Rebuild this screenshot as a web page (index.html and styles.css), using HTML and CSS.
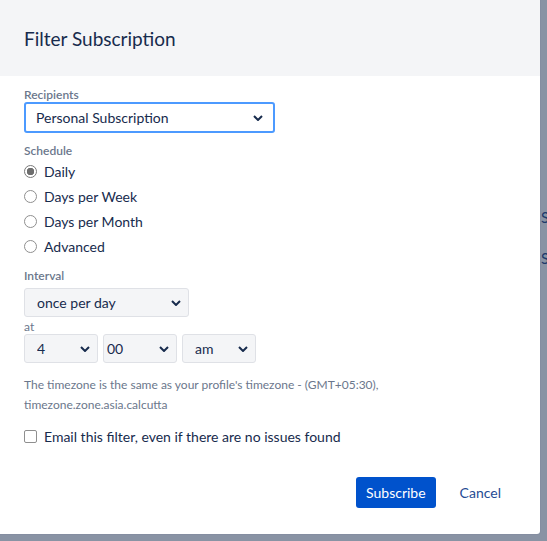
FILE: index.html
```html
<!DOCTYPE html>
<html>

<head>
  <title>Filter Subscription</title>
  <meta name="viewport" content="width=device-width, initial-scale=1.0">
  <link rel="stylesheet" href="styles.css">
</head>

<body>
  <div class="page">
    <div class="dialog">
      <div class="dialog-header">
        <h2>Filter Subscription</h2>
      </div>

      <form class="dialog-body">
        <label class="field-label" for="recipients">Recipients</label>
        <div class="select-wrap select-focus">
          <select id="recipients">
            <option>Personal Subscription</option>
          </select>
          <svg class="chevron" width="10" height="6" viewBox="0 0 10 6"><path d="M1 1l4 4 4-4" /></svg>
        </div>

        <div class="field-label schedule-label">Schedule</div>
        <div class="radios">
          <label class="radio"><input type="radio" name="schedule" checked> Daily</label>
          <label class="radio"><input type="radio" name="schedule"> Days per Week</label>
          <label class="radio"><input type="radio" name="schedule"> Days per Month</label>
          <label class="radio"><input type="radio" name="schedule"> Advanced</label>
        </div>

        <label class="field-label interval-label" for="interval">Interval</label>
        <div class="select-wrap select-interval">
          <select id="interval">
            <option>once per day</option>
          </select>
          <svg class="chevron" width="10" height="6" viewBox="0 0 10 6"><path d="M1 1l4 4 4-4" /></svg>
        </div>

        <div class="at-label">at</div>
        <div class="time-row">
          <div class="select-wrap select-time">
            <select><option>4</option></select>
            <svg class="chevron" width="10" height="6" viewBox="0 0 10 6"><path d="M1 1l4 4 4-4" /></svg>
          </div>
          <div class="select-wrap select-time select-minutes">
            <select><option>00</option></select>
            <svg class="chevron" width="10" height="6" viewBox="0 0 10 6"><path d="M1 1l4 4 4-4" /></svg>
          </div>
          <div class="select-wrap select-time">
            <select><option>am</option></select>
            <svg class="chevron" width="10" height="6" viewBox="0 0 10 6"><path d="M1 1l4 4 4-4" /></svg>
          </div>
        </div>

        <p class="timezone">The timezone is the same as your profile's timezone - (GMT+05:30),<br>timezone.zone.asia.calcutta</p>

        <label class="checkbox"><input type="checkbox"> Email this filter, even if there are no issues found</label>

        <div class="dialog-footer">
          <button type="submit" class="btn-primary">Subscribe</button>
          <button type="button" class="btn-link">Cancel</button>
        </div>
      </form>
    </div>

    <div class="behind">
      <span>S</span>
      <span>S</span>
    </div>
  </div>
</body>

</html>
```

FILE: styles.css
```css
body {
  font-family: 'Segoe UI', Lato, sans-serif;
  background: #8993a4;
  margin: 0;
  padding: 0;
  height: 100vh;
  overflow: hidden;
  color: #172b4d;
}

.page {
  display: flex;
  align-items: flex-start;
}

.dialog {
  width: 540px;
  flex-shrink: 0;
  background: white;
  border-bottom-right-radius: 3px;
  box-shadow: 0 0 1px rgba(9, 30, 66, 0.3);
}

.dialog-header {
  background: #f4f5f7;
  height: 76px;
  padding: 0 24px;
  display: flex;
  align-items: center;
}

.dialog-header h2 {
  margin: 0;
  font-size: 19px;
  font-weight: 400;
  color: #172b4d;
}

.dialog-body {
  display: flex;
  flex-direction: column;
  align-items: flex-start;
  padding: 12px 24px 26px;
}

.field-label {
  font-size: 12px;
  line-height: 14px;
  font-weight: 600;
  color: #6b778c;
}

.schedule-label {
  margin-top: 11px;
}

.interval-label {
  margin-top: 10px;
  margin-bottom: 5px;
}

.select-wrap {
  position: relative;
  display: flex;
}

.select-wrap select {
  appearance: none;
  -webkit-appearance: none;
  width: 100%;
  height: 29px;
  padding: 0 12px;
  border: 1px solid #dfe1e6;
  border-radius: 3px;
  background: #f4f5f7;
  font-family: inherit;
  font-size: 14px;
  color: #172b4d;
  box-sizing: border-box;
}

.chevron {
  position: absolute;
  top: 50%;
  right: 8px;
  transform: translateY(-50%);
  fill: none;
  stroke: #172b4d;
  stroke-width: 2;
  pointer-events: none;
}

.select-focus {
  width: 251px;
}

.select-focus select {
  height: 31px;
  border: 2px solid #4c9aff;
  background: white;
  padding: 0 10px;
}

.select-focus .chevron {
  right: 12px;
}

.select-interval {
  width: 165px;
}

.at-label {
  font-size: 12px;
  line-height: 14px;
  color: #6b778c;
  margin-top: 3px;
}

.time-row {
  display: flex;
  gap: 5px;
}

.select-time {
  width: 74px;
}

.select-minutes select {
  padding-left: 3px;
}

.radios {
  display: flex;
  flex-direction: column;
  margin-top: 1px;
}

.radio,
.checkbox {
  display: flex;
  align-items: center;
  gap: 7px;
  height: 25px;
  font-size: 14px;
  color: #172b4d;
}

.radio input,
.checkbox input {
  appearance: none;
  -webkit-appearance: none;
  margin: 0;
  width: 13px;
  height: 13px;
  border: 1px solid #8f8f8f;
  background: white;
  box-sizing: border-box;
}

.radio input {
  border-radius: 50%;
}

.radio input:checked {
  border-color: #7a7a7a;
  background: radial-gradient(circle, #6e6e6e 0 3.5px, white 4px);
}

.checkbox input {
  border-radius: 2px;
}

.timezone {
  margin: 12px 0 0;
  font-size: 12px;
  line-height: 19.5px;
  color: #6b778c;
}

.checkbox {
  margin-top: 10px;
  height: 24px;
}

.dialog-footer {
  align-self: stretch;
  display: flex;
  justify-content: flex-end;
  gap: 14px;
  margin-top: 29px;
  padding-right: 5px;
}

.btn-primary {
  height: 31px;
  padding: 0 10px;
  background: #0052cc;
  color: white;
  border: none;
  border-radius: 3px;
  font-family: inherit;
  font-size: 14px;
  cursor: pointer;
}

.btn-link {
  height: 31px;
  padding: 0 10px;
  background: none;
  border: none;
  color: #1f4c94;
  font-family: inherit;
  font-size: 14px;
  cursor: pointer;
}

.behind {
  display: flex;
  flex-direction: column;
  gap: 23px;
  padding: 208px 0 0 1px;
  font-size: 15px;
  color: #1d3a6b;
}
```
